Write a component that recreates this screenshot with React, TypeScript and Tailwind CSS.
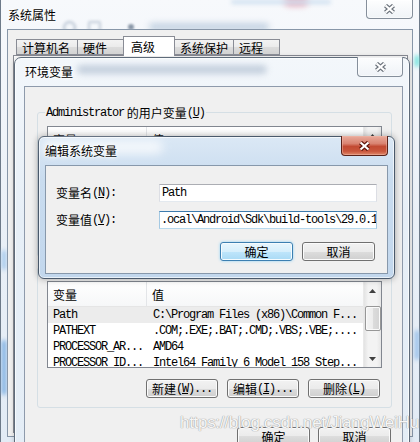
import React from "react";

const cjk = "font-['Noto_Sans_CJK_SC',sans-serif]";
const mono = "font-['Liberation_Mono','Noto_Sans_CJK_SC',monospace] text-[12px] tracking-[-1.2px]";
const glow = "[text-shadow:0_0_6px_#fff,0_0_3px_#fff,0_0_2px_#fff]";

function CloseX({ red }: { red?: boolean }) {
  const d = "M2.5 1.5 10.5 8.5M10.5 1.5 2.5 8.5";
  return (
    <svg width="13" height="10" viewBox="0 0 13 10">
      <path d={d} stroke={red ? "#5e1409" : "#6c737c"} strokeWidth="4.4" />
      <path d={d} stroke="#fff" strokeWidth="2.2" />
    </svg>
  );
}

function Btn({ children, primary, w }: { children: React.ReactNode; primary?: boolean; w: string }) {
  return (
    <div
      className={`${w} h-[19px] shrink-0 rounded-[3px] border flex items-center justify-center text-[12px] leading-none whitespace-nowrap ${
        primary
          ? "border-[#3c7fb1] bg-[linear-gradient(#e8f6fd,#d6effc_50%,#bfe6fb_50%,#a9daf5)] shadow-[inset_0_0_0_1px_#f5fbfe,0_0_3px_#8fd2f5]"
          : "border-[#707070] bg-[linear-gradient(#f2f2f2,#ebebeb_50%,#dddddd_50%,#cfcfcf)] shadow-[inset_0_0_0_1px_#fbfbfb]"
      }`}
    >
      {children}
    </div>
  );
}

function Arrow({ down }: { down?: boolean }) {
  return (
    <svg width="7" height="4" viewBox="0 0 7 4">
      <path d={down ? "M0 0H7L3.5 4Z" : "M0 4H7L3.5 0Z"} fill="#404040" />
    </svg>
  );
}

function Scrollbar() {
  return (
    <div className="w-[18px] h-full shrink-0 flex flex-col items-center border-l border-[#e9e9e9] bg-[linear-gradient(90deg,#e3e3e3,#f3f3f3_25%,#f3f3f3_75%,#e6e6e6)]">
      <div className="h-[17px] flex items-center justify-center">
        <Arrow />
      </div>
      <div className="mt-[7px] w-[16px] h-[25px] rounded-[2px] border border-[#979797] bg-[linear-gradient(90deg,#f4f4f4,#ececec_50%,#dcdcdc_50%,#d3d3d3)] shadow-[inset_0_0_0_1px_#fafafa]" />
      <div className="flex-1" />
      <div className="h-[17px] flex items-center justify-center">
        <Arrow down />
      </div>
    </div>
  );
}

type Row = { name: string; value: string; selected?: boolean };

function VarList({ rows, h }: { rows: Row[]; h: string }) {
  return (
    <div className={`${h} w-[335px] border border-[#828790] bg-white flex overflow-hidden`}>
      <div className="flex-1 min-w-0 flex flex-col">
        <div className={`h-[25px] shrink-0 flex border-b border-[#e5e5e5] bg-[linear-gradient(#ffffff,#f6f7f8)] text-[12px] leading-[14px] ${cjk}`}>
          <div className="w-[99px] pl-[5px] pt-[6px] border-r border-[#e3e5e8]">变量</div>
          <div className="flex-1 pl-[5px] pt-[6px]">值</div>
        </div>
        {rows.map((r) => (
          <div
            key={r.name}
            className={`h-[16px] shrink-0 flex items-center whitespace-nowrap ${mono} ${r.selected ? "bg-[#ececec]" : ""}`}
          >
            <div className="w-[99px] pl-[5px] overflow-hidden">{r.name}</div>
            <div className="flex-1 pl-[6px] overflow-hidden">{r.value}</div>
          </div>
        ))}
      </div>
      <Scrollbar />
    </div>
  );
}

const sysRows: Row[] = [
  { name: "Path", value: "C:\\Program Files (x86)\\Common F...", selected: true },
  { name: "PATHEXT", value: ".COM;.EXE;.BAT;.CMD;.VBS;.VBE;...." },
  { name: "PROCESSOR_AR...", value: "AMD64" },
  { name: "PROCESSOR_ID...", value: "Intel64 Family 6 Model 158 Step..." },
];

const userRows: Row[] = [
  { name: "Path", value: "C:\\Users\\Administrator\\AppData\\..." },
  { name: "TEMP", value: "%USERPROFILE%\\AppData\\Local\\Temp" },
  { name: "TMP", value: "%USERPROFILE%\\AppData\\Local\\Temp" },
];

const tabs = [
  { label: "计算机名", w: "w-[61px]" },
  { label: "硬件", w: "w-[47px]" },
  { label: "高级", w: "w-[52px]", active: true },
  { label: "系统保护", w: "w-[59px]" },
  { label: "远程", w: "w-[47px]" },
];

export default function App() {
  return (
    <div className={`relative w-[420px] h-[442px] overflow-hidden bg-[#eef3f9] text-black select-none ${cjk}`}>
      {/* 系统属性 */}
      <div className="absolute inset-0 border-x border-[#6d7a89] bg-[linear-gradient(180deg,#f7f9fc,#eaf0f7_50%,#e2ebf5)]">
        {/* page blurred behind the glass */}
        <div className="absolute left-[62px] top-[21px] w-[13px] h-[13px] rounded-full border-2 border-[#b7c3d1] blur-[1.5px]" />
        <div className="absolute left-[87px] top-[21px] w-[13px] h-[12px] rounded-[2px] border-2 border-[#c2ccd8] blur-[1.5px]" />
        <div className="absolute left-[127px] top-[24px] w-[6px] h-[6px] rounded-full bg-[#8a97a8] blur-[1px]" />
        <div className="absolute left-[148px] top-[23px] w-[120px] h-[8px] rounded-full bg-[#c5d3e3] blur-[3px]" />
        <div className="absolute left-[283px] top-[-4px] w-[24px] h-[10px] rounded-full bg-[#e7a9b9] blur-[3px]" />
        <div className="absolute left-[230px] top-[0px] w-[100px] h-[4px] rounded-full bg-[#cfe0f0] blur-[2px]" />
        <div className="absolute left-[1px] top-[340px] w-[4px] h-[55px] rounded-full bg-[#6fa6de] blur-[2px]" />
        <div className="absolute left-[1px] top-[250px] w-[4px] h-[20px] rounded-full bg-[#9cc3ea] blur-[2px]" />
        <div className="absolute left-[414px] top-[55px] w-[4px] h-[12px] rounded-full bg-[#5fe0d8] blur-[2px]" />
        <div className="absolute left-[414px] top-[330px] w-[4px] h-[30px] rounded-full bg-[#8cb8e6] blur-[2px]" />

        <div className={`relative h-[29px] pl-[7px] flex items-center text-[12px] leading-none ${glow}`}>系统属性</div>
        <div className="absolute left-[365px] top-0 w-[47px] h-[19px] rounded-b-[4px] border border-t-0 border-[#858f9b] bg-[linear-gradient(#ffffffcc,#eef2f6cc)] shadow-[inset_0_0_0_1px_#ffffff80] flex items-center justify-center">
          <CloseX />
        </div>

        <div className="relative ml-[6px] w-[406px] h-[408px] border border-[#8796a8] bg-[#f0f0f0] pt-[6px]">
          <div className="relative z-10 h-[20px] pl-[8px] flex items-end -mb-px">
            {tabs.map((t) =>
              t.active ? (
                <div
                  key={t.label}
                  className={`${t.w} h-[20px] -mx-px pl-[7px] pt-[3px] border border-b-0 border-[#898c95] bg-white text-[12px] leading-[14px]`}
                >
                  {t.label}
                </div>
              ) : (
                <div
                  key={t.label}
                  className={`${t.w} h-[16px] mb-px pl-[5px] pt-[1px] border border-r-0 last:border-r border-[#898c95] bg-[linear-gradient(#f3f3f3,#ebebeb_50%,#dddddd_50%,#d3d3d3)] text-[12px] leading-[14px]`}
                >
                  {t.label}
                </div>
              )
            )}
          </div>
          <div className="ml-[5px] w-[395px] h-[378px] border border-[#898c95] bg-white" />
        </div>
      </div>

      {/* 环境变量 */}
      <div className="absolute left-[14px] top-[57px] w-[396px] h-[400px] flex flex-col rounded-t-[7px] border border-[#5e6b7a] bg-[linear-gradient(180deg,#f3f7fb,#e7eff7_40%,#e4edf6)] shadow-[inset_0_0_0_1px_#ffffffb0,0_0_5px_#00000030]">
        <div className="absolute left-[62px] top-[7px] w-[190px] h-[9px] rounded-full bg-[#b9c6d6] blur-[3px] opacity-80" />
        <div className={`relative h-[28px] shrink-0 pl-[10px] flex items-center text-[12px] leading-none ${glow}`}>环境变量</div>
        <div className="absolute left-[342px] top-[-1px] w-[46px] h-[20px] rounded-b-[4px] border border-t-0 border-[#858f9b] bg-[linear-gradient(#ffffffcc,#eef2f6cc)] shadow-[inset_0_0_0_1px_#ffffff80] flex items-center justify-center">
          <CloseX />
        </div>

        <div className="ml-[9px] w-[379px] flex-1 border border-[#8e9aab] bg-[#f0f0f0] pt-[25px] pl-[12px] pr-[10px]">
          <div className="h-[145px] border border-[#d5dfe5] rounded-[3px]">
            <div className="-mt-[8px] ml-[7px] w-fit h-[15px] px-[1px] flex items-center bg-[#f0f0f0] whitespace-nowrap">
              <span className={mono}>Administrator </span>
              <span className="text-[12px] leading-none">&nbsp;的用户变量</span>
              <span className={mono}>(<u>U</u>)</span>
            </div>
            <div className="mt-[6px] ml-[9px]">
              <VarList rows={userRows} h="h-[95px]" />
            </div>
          </div>

          <div className="mt-[10px] border border-[#d5dfe5] rounded-[3px] pb-[9px]">
            <div className="-mt-[8px] ml-[7px] w-fit h-[15px] px-[1px] flex items-center bg-[#f0f0f0] whitespace-nowrap">
              <span className="text-[12px] leading-none">系统变量</span>
              <span className={mono}>(<u>S</u>)</span>
            </div>
            <div className="mt-[6px] ml-[9px]">
              <VarList rows={sysRows} h="h-[87px]" />
            </div>
            <div className="mt-[11px] pr-[11px] flex justify-end gap-[9px]">
              <Btn w="w-[72px]">
                <span>新建</span>
                <span className={mono}>(<u>W</u>)...</span>
              </Btn>
              <Btn w="w-[72px]">
                <span>编辑</span>
                <span className={mono}>(<u>I</u>)...</span>
              </Btn>
              <Btn w="w-[72px]">
                <span>删除</span>
                <span className={mono}>(<u>L</u>)</span>
              </Btn>
            </div>
          </div>

          <div className="mt-[19px] pr-[1px] flex justify-end gap-[8px]">
            <Btn w="w-[73px]">确定</Btn>
            <Btn w="w-[73px]">取消</Btn>
          </div>
        </div>
      </div>

      {/* 编辑系统变量 */}
      <div className="absolute left-[38px] top-[136px] w-[357px] h-[143px] rounded-[6px] border border-[#4a596b] bg-[linear-gradient(180deg,#dbe8f5,#c9dcef_30%,#c2d7ed)] shadow-[inset_0_0_0_1px_#ffffffa0,0_0_7px_#00000055]">
        <div className="absolute left-[4px] top-[3px] w-[120px] h-[14px] rounded-full bg-[#ffffff] blur-[5px] opacity-70" />
        <div className={`relative h-[28px] pl-[6px] flex items-center text-[12px] leading-none ${glow}`}>编辑系统变量</div>
        <div className="absolute left-[302px] top-[-1px] w-[47px] h-[20px] rounded-b-[4px] border border-t-0 border-[#5a2219] bg-[linear-gradient(#e9ab9c,#d98371_40%,#c24a33_55%,#c9563c_80%,#e0896a)] shadow-[inset_0_0_0_1px_#f0b8a880] flex items-center justify-center">
          <CloseX red />
        </div>

        <div className="ml-[6px] w-[343px] h-[109px] border border-[#8798ab] bg-[#f0f0f0] pt-[18px] pl-[10px] pr-[10px]">
          <div className="flex items-center">
            <div className="w-[103px] flex items-center whitespace-nowrap">
              <span className="text-[12px] leading-none">变量名</span>
              <span className={mono}>(<u>N</u>):</span>
            </div>
            <div className={`w-[218px] h-[18px] border border-[#abadb3] border-b-[#e3e9ef] border-x-[#dcdee4] bg-white pl-[2px] flex items-center ${mono}`}>
              Path
            </div>
          </div>
          <div className="mt-[9px] flex items-center">
            <div className="w-[103px] flex items-center whitespace-nowrap">
              <span className="text-[12px] leading-none">变量值</span>
              <span className={mono}>(<u>V</u>):</span>
            </div>
            <div className={`w-[218px] h-[18px] border border-[#3d7bad] border-x-[#a4c9e3] border-b-[#b7d9ed] bg-white pl-[1px] flex items-center overflow-hidden whitespace-nowrap ${mono}`}>
              {".ocal\\Android\\Sdk\\build-tools\\29.0.1"}
            </div>
          </div>
          <div className="mt-[13px] pr-[2px] flex justify-end gap-[9px]">
            <Btn w="w-[73px]" primary>
              确定
            </Btn>
            <Btn w="w-[73px]">取消</Btn>
          </div>
        </div>
      </div>

      {/* watermark */}
      <div className="absolute left-[180px] top-[414px] font-['Liberation_Sans',Arial,sans-serif] text-[17px] leading-none tracking-[-0.3px] text-[#f6f6f6] whitespace-nowrap [text-shadow:0_0_1px_#9a9a9a,0_0_1px_#9a9a9a]">
        https://blog.csdn.net/JiangWeiHu
      </div>
    </div>
  );
}
